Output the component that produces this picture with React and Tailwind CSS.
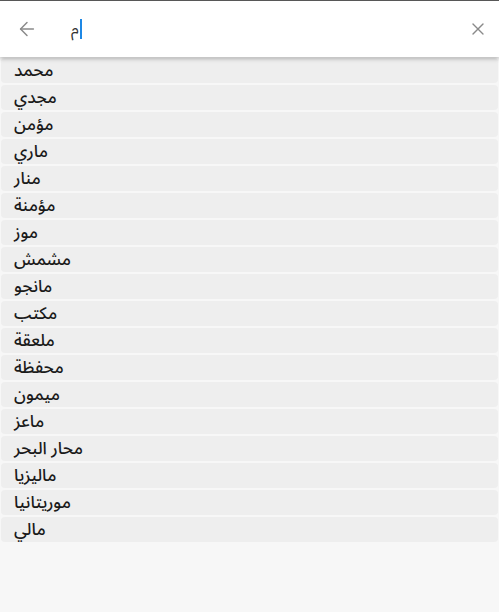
import { ArrowLeft, X } from "lucide-react";

const items = [
  "محمد",
  "مجدي",
  "مؤمن",
  "ماري",
  "منار",
  "مؤمنة",
  "موز",
  "مشمش",
  "مانجو",
  "مكتب",
  "ملعقة",
  "محفظة",
  "ميمون",
  "ماعز",
  "محار البحر",
  "ماليزيا",
  "موريتانيا",
  "مالي",
];

const App = () => {
  return (
    <div
      className="w-full h-screen bg-[#f7f7f7] flex flex-col border-t border-[#5a5a5a]"
      style={{ fontFamily: '"Noto Sans Arabic", "Noto Sans", sans-serif' }}
    >
      <div className="h-[56px] bg-white flex items-center shadow-[0_2px_4px_rgba(0,0,0,0.25)] relative z-10">
        <ArrowLeft className="ml-[16px] w-[22px] h-[22px] text-[#8a8a8a]" strokeWidth={1.6} />
        <div className="ml-[33px] flex items-center text-[16px] text-[#333]">
          <span>م</span>
          <span className="ml-[1px] w-[2px] h-[20px] bg-[#1e88e5]" />
        </div>
        <X className="ml-auto mr-[11px] w-[20px] h-[20px] text-[#8a8a8a]" strokeWidth={1.6} />
      </div>
      <div className="flex flex-col gap-[2px] pt-[1px]">
        {items.map((item) => (
          <div
            key={item}
            className="h-[25px] mx-[1px] bg-[#eeeeee] rounded-[4px] flex items-center px-[13px] text-[17px] leading-[20px] font-medium text-[#1a1a1a]"
          >
            <span dir="rtl">{item}</span>
          </div>
        ))}
      </div>
    </div>
  );
};

export default App;
